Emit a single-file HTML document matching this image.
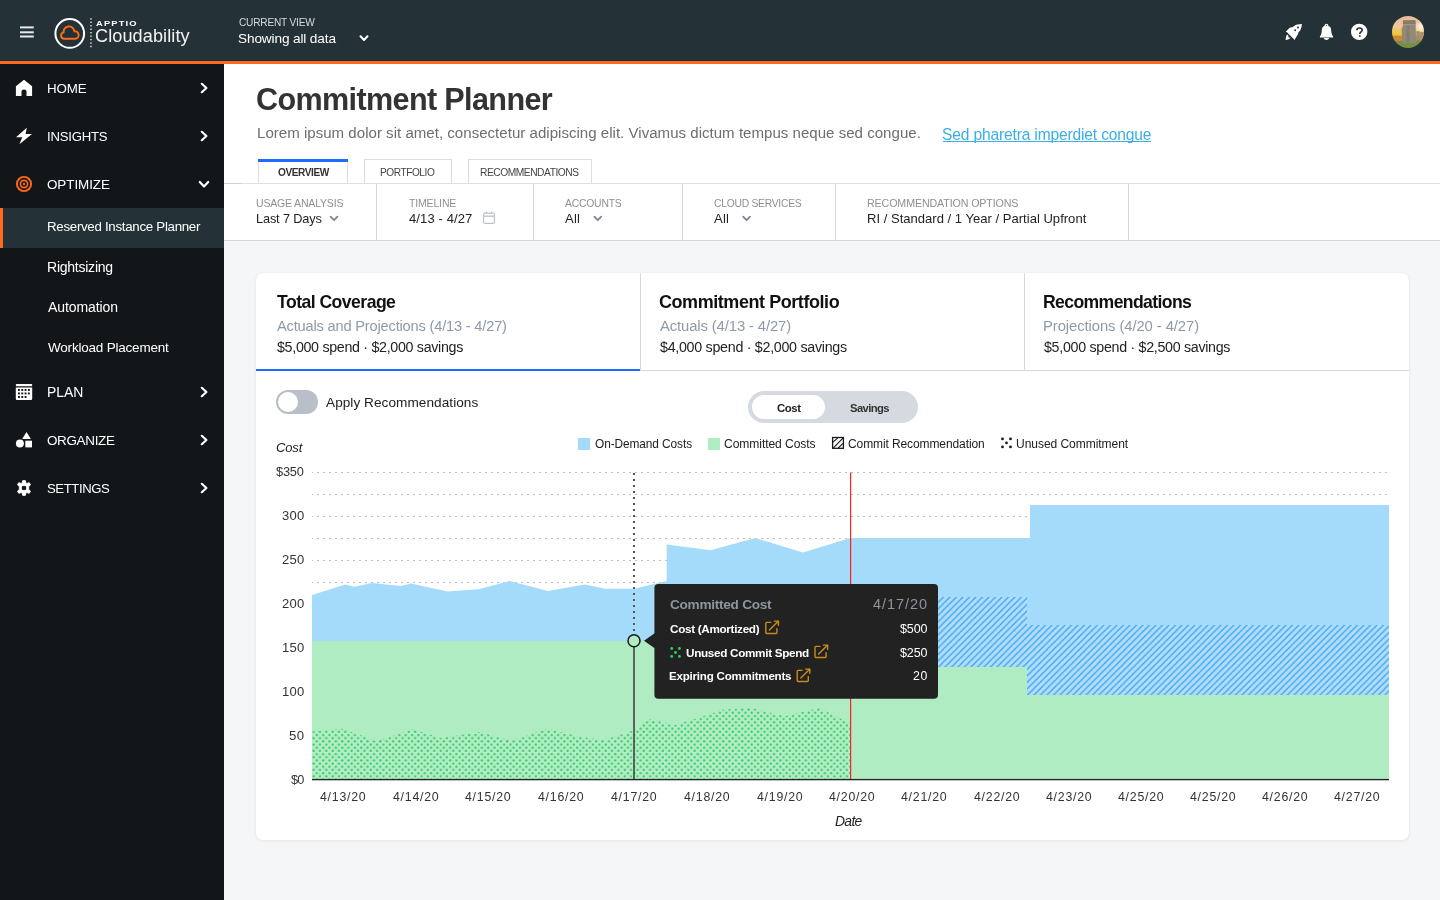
<!DOCTYPE html>
<html><head><meta charset="utf-8"><title>Commitment Planner</title>
<style>
*{box-sizing:border-box;margin:0;padding:0}
html,body{width:1440px;height:900px;overflow:hidden;background:#f5f6f8;font-family:'Liberation Sans', sans-serif}
.abs{position:absolute}
.t{position:absolute;white-space:nowrap;font-family:'Liberation Sans', sans-serif;will-change:transform}
</style></head><body>
<div class="abs" style="left:0;top:0;width:1440px;height:61px;background:#243238"></div>
<div class="abs" style="left:0;top:60px;width:1440px;height:1px;background:#1b2b36"></div>
<div class="abs" style="left:0;top:61px;width:1440px;height:3px;background:#ff6a1e"></div>
<div class="abs" style="left:0;top:64px;width:224px;height:836px;background:#121619"></div>
<div class="abs" style="left:0;top:208px;width:224px;height:40px;background:#243238"></div>
<div class="abs" style="left:0;top:208px;width:3px;height:40px;background:#ff6a1e"></div>
<div class="abs" style="left:224px;top:64px;width:1216px;height:177px;background:#ffffff"></div>
<div class="abs" style="left:224px;top:183px;width:1216px;height:1px;background:#e0e0e0"></div><div class="abs" style="left:224px;top:183px;width:18px;height:1px;background:#d2d2d2"></div>
<div class="abs" style="left:224px;top:240px;width:1216px;height:1px;background:#d6d6d6"></div>
<div class="abs" style="left:376px;top:184px;width:1px;height:56px;background:#d8d8d8"></div>
<div class="abs" style="left:533px;top:184px;width:1px;height:56px;background:#d8d8d8"></div>
<div class="abs" style="left:682px;top:184px;width:1px;height:56px;background:#d8d8d8"></div>
<div class="abs" style="left:835px;top:184px;width:1px;height:56px;background:#d8d8d8"></div>
<div class="abs" style="left:1128px;top:184px;width:1px;height:56px;background:#d8d8d8"></div>
<div class="abs" style="left:258px;top:159px;width:90px;height:24px;border:1px solid #dddddd;border-bottom:none;background:#fff"></div>
<div class="abs" style="left:258px;top:159px;width:90px;height:3px;background:#1f6bff"></div>
<div class="abs" style="left:364px;top:159px;width:88px;height:24px;border:1px solid #dddddd;border-bottom:none;background:#fff"></div>
<div class="abs" style="left:468px;top:159px;width:124px;height:24px;border:1px solid #dddddd;border-bottom:none;background:#fff"></div>
<div class="abs" style="left:943px;top:141px;width:208px;height:1px;background:#3aaee6"></div>
<div class="abs" style="left:256px;top:273px;width:1153px;height:567px;background:#fff;border-radius:7px;box-shadow:0 0 1px rgba(0,0,0,0.12),0 1px 4px rgba(0,0,0,0.06)"></div>
<div class="abs" style="left:256px;top:370px;width:1153px;height:1px;background:#d6dadf"></div>
<div class="abs" style="left:256px;top:369px;width:384px;height:2px;background:#1f6bff"></div>
<div class="abs" style="left:640px;top:273px;width:1px;height:97px;background:#d6dadf"></div>
<div class="abs" style="left:1024px;top:273px;width:1px;height:97px;background:#d6dadf"></div>
<div class="abs" style="left:276px;top:390px;width:42px;height:24px;border-radius:12px;background:#b8bfc9"></div>
<div class="abs" style="left:278px;top:392px;width:20px;height:20px;border-radius:10px;background:#fff"></div>
<div class="abs" style="left:748px;top:391px;width:170px;height:32px;border-radius:16px;background:#d5dae1"></div>
<div class="abs" style="left:752px;top:395px;width:73px;height:24px;border-radius:12px;background:#fff"></div>
<div class="abs" style="left:578px;top:438px;width:12px;height:12px;background:#a5dbfa"></div>
<div class="abs" style="left:708px;top:438px;width:12px;height:12px;background:#b0ecc2"></div>
<svg class="abs" width="1440" height="900" viewBox="0 0 1440 900" style="left:0;top:0">
<defs>
<pattern id="hatch" patternUnits="userSpaceOnUse" width="6.5" height="6.5">
<rect width="6.5" height="6.5" fill="#b3dcf8"/>
<path d="M-1.6,1.6 L1.6,-1.6 M0,6.5 L6.5,0 M4.9,8.1 L8.1,4.9" stroke="#33a5f5" stroke-width="1.3"/>
</pattern>
<pattern id="dots" patternUnits="userSpaceOnUse" width="6.35" height="6.35" x="312" y="0">
<rect width="6.35" height="6.35" fill="#b3ecc6"/>
<circle cx="1.6" cy="1.6" r="1.15" fill="#30cf60"/>
<circle cx="4.775" cy="4.775" r="1.15" fill="#30cf60"/>
</pattern>
</defs>
<g stroke="#bac0c9" stroke-width="1" stroke-dasharray="2 4" stroke-dashoffset="1"><line x1="312" y1="472.5" x2="1389" y2="472.5"/><line x1="312" y1="494.5" x2="1389" y2="494.5"/><line x1="312" y1="516.5" x2="1389" y2="516.5"/><line x1="312" y1="538.5" x2="1389" y2="538.5"/><line x1="312" y1="560.5" x2="1389" y2="560.5"/><line x1="312" y1="582.5" x2="1389" y2="582.5"/><line x1="312" y1="604.5" x2="1389" y2="604.5"/><line x1="312" y1="626.5" x2="1389" y2="626.5"/><line x1="312" y1="648.5" x2="1389" y2="648.5"/><line x1="312" y1="670.5" x2="1389" y2="670.5"/><line x1="312" y1="692.5" x2="1389" y2="692.5"/><line x1="312" y1="714.5" x2="1389" y2="714.5"/><line x1="312" y1="736.5" x2="1389" y2="736.5"/><line x1="312" y1="758.5" x2="1389" y2="758.5"/></g>
<polygon points="312.0,595.1 345.3,584.6 354.6,586.7 371.7,582.9 400.8,586.1 411.2,583.6 447.4,591.5 478.6,589.2 509.7,581.1 547.9,591.1 584.7,584.6 605.6,588.8 634.0,588.8 666.7,581.1 666.7,544.6 710.7,550.3 755.1,538.0 803.0,552.4 850.3,538.0 1030.0,538.0 1030.0,505.0 1389.0,505.0 1389.0,780.0 312.0,780.0" fill="#a5dbfa"/>
<rect x="312" y="641" width="538.5" height="139" fill="#b0ecc2"/>
<rect x="850.5" y="667" width="176.5" height="113" fill="#b0ecc2"/>
<rect x="1027" y="695" width="362" height="85" fill="#b0ecc2"/>
<rect x="850.5" y="597" width="176.5" height="70" fill="url(#hatch)"/>
<rect x="1027" y="625" width="362" height="70" fill="url(#hatch)"/>
<polygon points="312.0,731.5 342.0,728.8 357.5,734.0 376.0,741.2 413.0,729.2 441.2,738.0 480.0,732.0 511.2,740.9 547.2,728.8 580.0,736.7 603.3,740.2 632.5,730.8 650.0,719.2 675.3,725.0 696.7,718.2 724.0,709.5 751.2,707.9 784.3,716.3 819.3,707.9 849.5,723.0 850.5,723.0 850.5,779.0 312.0,779.0" fill="url(#dots)"/>
<rect x="312" y="778.9" width="1077" height="1.4" fill="#262626"/>
<rect x="850" y="472.5" width="1.2" height="306.5" fill="#ff2222"/>
<line x1="634" y1="473" x2="634" y2="634" stroke="#555" stroke-width="2" stroke-dasharray="2 4"/>
<rect x="633.2" y="647" width="1.6" height="132" fill="#444"/>
<circle cx="634" cy="640.7" r="6" fill="#b0ecc2" stroke="#1a1a1a" stroke-width="1.5"/>
<path d="M644,640.7 L655,633 L655,648.5 Z" fill="#222"/>
<rect x="654.4" y="584" width="283.6" height="114.8" rx="4" fill="#222222"/>
</svg>
<svg class="abs" width="1440" height="900" viewBox="0 0 1440 900" style="left:0;top:0;pointer-events:none">
<!-- hamburger -->
<g fill="#e6e8e9"><rect x="20" y="26.4" width="13.8" height="2"/><rect x="20" y="31.3" width="13.8" height="2"/><rect x="20" y="35.5" width="13.8" height="2"/></g>
<!-- logo -->
<circle cx="69.75" cy="33.45" r="14.35" fill="none" stroke="#ffffff" stroke-width="2"/>
<path d="M63.8,38.7 A3.2,3.2 0 0 1 63.6,32.4 A5.4,5.4 0 0 1 74.4,31.3 A3.75,3.75 0 0 1 75.6,38.7 Z" fill="none" stroke="#ff6a13" stroke-width="1.9" stroke-linejoin="round"/>
<g fill="#e8e8e8"><rect x="90.3" y="18.2" width="1.4" height="1.4"/><rect x="90.3" y="21.6" width="1.4" height="1.4"/><rect x="90.3" y="25.1" width="1.4" height="1.4"/><rect x="90.3" y="28.6" width="1.4" height="1.4"/><rect x="90.3" y="32.0" width="1.4" height="1.4"/><rect x="90.3" y="35.5" width="1.4" height="1.4"/><rect x="90.3" y="38.9" width="1.4" height="1.4"/><rect x="90.3" y="42.4" width="1.4" height="1.4"/><rect x="90.3" y="45.8" width="1.4" height="1.4"/></g>
<!-- header chevron -->
<path d="M360.5,36.3 L364,40 L367.5,36.3" fill="none" stroke="#ffffff" stroke-width="2" stroke-linecap="round" stroke-linejoin="round"/>
<!-- rocket -->
<path d="M1301.9,24 L1297.2,24.4 C1295.2,25.1 1293.7,26.1 1292.4,27.3 L1290,27.6 L1285.9,31.6 L1294.4,40 L1298.1,34 L1298.5,32.3 C1300.7,30.4 1301.7,27.4 1301.9,24 Z" fill="#ffffff"/>
<circle cx="1298" cy="27.6" r="1" fill="#243238"/>
<circle cx="1295.2" cy="30.2" r="0.95" fill="#243238"/>
<path d="M1285.6,40 C1285.7,37.6 1286.3,35.3 1287.7,34.1 C1289.2,32.8 1291.2,32.9 1292.2,34.2 C1292.6,36.6 1290.4,39.4 1285.6,40 Z" fill="#ffffff"/>
<circle cx="1289.4" cy="36.6" r="1.1" fill="#243238"/>
<line x1="1286.2" y1="32.6" x2="1293.6" y2="40" stroke="#243238" stroke-width="1.4"/>
<!-- bell -->
<path d="M1326.4,23.8 C1325.3,23.8 1324.6,24.6 1324.6,25.7 C1322.6,26.4 1321.9,28.2 1321.8,30.4 C1321.6,33 1321.2,34.9 1319.9,36.4 L1319.9,37.4 L1333.1,37.4 L1333.1,36.4 C1331.8,34.9 1331.4,33 1331.2,30.4 C1331.1,28.2 1330.4,26.4 1328.3,25.7 C1328.3,24.6 1327.5,23.8 1326.4,23.8 Z" fill="#ffffff"/>
<ellipse cx="1326.4" cy="25.4" rx="0.45" ry="0.7" fill="#243238"/>
<path d="M1323.7,38.1 L1329.1,38.1 C1328.7,39.4 1327.7,40 1326.4,40 C1325.1,40 1324.1,39.4 1323.7,38.1 Z" fill="#ffffff"/>
<!-- help -->
<circle cx="1359.2" cy="31.9" r="8.2" fill="#ffffff"/>
<path d="M1356.9,30.2 C1356.9,28.8 1357.9,28 1359.5,28 C1361.1,28 1362.2,28.8 1362.2,30.1 C1362.2,31.8 1359.8,31.9 1359.8,34" fill="none" stroke="#243238" stroke-width="1.6"/>
<rect x="1359" y="35.2" width="1.6" height="1.6" fill="#243238"/>
<!-- avatar -->
<defs>
<clipPath id="av"><circle cx="1408" cy="31.9" r="16"/></clipPath>
<linearGradient id="sky" x1="0" y1="0" x2="0" y2="1">
<stop offset="0" stop-color="#e6b49e"/><stop offset="0.55" stop-color="#f0c79a"/><stop offset="0.9" stop-color="#f2c440"/><stop offset="1" stop-color="#eeb828"/>
</linearGradient>
<radialGradient id="glow" cx="0.5" cy="0.5" r="0.5"><stop offset="0" stop-color="#fbf5ee"/><stop offset="1" stop-color="#fbf5ee" stop-opacity="0"/></radialGradient>
</defs>
<g clip-path="url(#av)">
<rect x="1390" y="14" width="36" height="22" fill="url(#sky)"/>
<circle cx="1421" cy="27" r="7" fill="url(#glow)"/>
<rect x="1390" y="35.8" width="36" height="5.5" fill="#c98a3c"/>
<path d="M1390,41.5 C1398,40.6 1412,41.2 1426,39.5 L1426,50 L1390,50 Z" fill="#77903f"/>
<path d="M1403,20.2 L1415.4,20 L1415.8,24.4 L1402.8,24.6 Z" fill="#857d6a"/>
<path d="M1401.6,29 L1403.4,24.4 L1415.6,24.4 L1416.2,43 L1402.4,43.2 Z" fill="#928a78"/>
<path d="M1406.8,26 L1409.6,25.6 L1409.4,42.8 L1406.4,42.8 Z" fill="#7e7664" opacity="0.6"/>
<rect x="1416.4" y="31.2" width="3.3" height="8.4" fill="#9f8c78"/>
<rect x="1420.2" y="32" width="3.6" height="7.6" fill="#a88f78"/>
</g>
<!-- sidebar icons -->
<path d="M24,79.8 L32.1,86.2 V95.4 Q32.1,96 31.5,96 H26.5 V91.6 C26.5,90.3 25.4,89.4 24,89.4 C22.6,89.4 21.5,90.3 21.5,91.6 V96 H16.5 Q15.9,96 15.9,95.4 V86.2 Z" fill="#ffffff"/>
<path d="M26.8,127.7 L16,137.3 L22.3,137.3 L19.4,144.3 L32,134 L25.6,134 Z" fill="#ffffff"/>
<circle cx="24" cy="184" r="7.1" fill="none" stroke="#ff6a1e" stroke-width="1.9"/>
<circle cx="24" cy="184" r="3.6" fill="none" stroke="#ff6a1e" stroke-width="1.7"/>
<circle cx="24" cy="184" r="1.2" fill="#ff6a1e"/>
<g fill="#ffffff">
<rect x="15.8" y="384" width="16.4" height="2.2" rx="0.8"/>
<path d="M15.8,387.4 H32.2 V398.8 Q32.2,400 31,400 H17 Q15.8,400 15.8,398.8 Z"/>
</g>
<g fill="#121619"><rect x="18.0" y="389.0" width="1.9" height="1.9"/><rect x="21.3" y="389.0" width="1.9" height="1.9"/><rect x="24.6" y="389.0" width="1.9" height="1.9"/><rect x="27.9" y="389.0" width="1.9" height="1.9"/><rect x="18.0" y="392.5" width="1.9" height="1.9"/><rect x="21.3" y="392.5" width="1.9" height="1.9"/><rect x="24.6" y="392.5" width="1.9" height="1.9"/><rect x="27.9" y="392.5" width="1.9" height="1.9"/><rect x="18.0" y="396.0" width="1.9" height="1.9"/><rect x="21.3" y="396.0" width="1.9" height="1.9"/><rect x="24.6" y="396.0" width="1.9" height="1.9"/></g>
<path d="M26.5,432 L30.9,439 L22.1,439 Z" fill="#ffffff"/>
<circle cx="19.9" cy="443.6" r="4" fill="#ffffff"/>
<rect x="25.3" y="440.7" width="6.7" height="6.7" fill="#ffffff"/>
<g transform="translate(24,488) scale(0.9)">
<path d="M-1.4,-8.2 H1.4 L2,-5.7 L3.3,-5 L5.8,-5.9 L7.2,-3.5 L5.2,-1.8 V1.8 L7.2,3.5 L5.8,5.9 L3.3,5 L2,5.7 L1.4,8.2 H-1.4 L-2,5.7 L-3.3,5 L-5.8,5.9 L-7.2,3.5 L-5.2,1.8 V-1.8 L-7.2,-3.5 L-5.8,-5.9 L-3.3,-5 L-2,-5.7 Z" fill="#ffffff" stroke="#ffffff" stroke-width="1" stroke-linejoin="round"/>
<circle r="2.6" fill="#121619"/>
</g>
<g fill="none" stroke="#ffffff" stroke-width="2.2" stroke-linecap="round" stroke-linejoin="round">
<path d="M201.8,83.8 L206.4,88 L201.8,92.2"/>
<path d="M201.8,131.8 L206.4,136 L201.8,140.2"/>
<path d="M199.8,182 L204,186.4 L208.2,182"/>
<path d="M201.8,387.8 L206.4,392 L201.8,396.2"/>
<path d="M201.8,435.8 L206.4,440 L201.8,444.2"/>
<path d="M201.8,483.8 L206.4,488 L201.8,492.2"/>
</g>
<!-- filter chevrons -->
<g fill="none" stroke="#7d889a" stroke-width="1.8" stroke-linecap="round" stroke-linejoin="round">
<path d="M330.6,216.6 L334,220.2 L337.4,216.6"/>
<path d="M594.4,216.6 L597.8,220.2 L601.2,216.6"/>
<path d="M743.2,216.6 L746.6,220.2 L750,216.6"/>
</g>
<!-- calendar -->
<g fill="none" stroke="#bcc3cb" stroke-width="1.3">
<rect x="483.6" y="213.2" width="10.8" height="10.2" rx="1.5"/>
<line x1="483.6" y1="216.2" x2="494.4" y2="216.2"/>
<line x1="486.5" y1="211.5" x2="486.5" y2="213.5"/>
<line x1="491.5" y1="211.5" x2="491.5" y2="213.5"/>
</g>
<!-- legend icons -->
<rect x="832.6" y="437.5" width="10.8" height="10.8" fill="none" stroke="#1a1a1a" stroke-width="1.3"/>
<g stroke="#1a1a1a" stroke-width="1.1">
<line x1="833" y1="442.2" x2="837.8" y2="437.8"/>
<line x1="833.4" y1="447.8" x2="843" y2="438.2"/>
<line x1="838.2" y1="448" x2="843" y2="443.4"/>
</g>
<g fill="#1a1a1a">
<circle cx="1002.5" cy="438.9" r="1.4"/><circle cx="1010.5" cy="438.9" r="1.4"/><circle cx="1006.5" cy="442.9" r="1.4"/><circle cx="1002.5" cy="446.9" r="1.4"/><circle cx="1010.5" cy="446.9" r="1.4"/>
</g>
<!-- tooltip icons -->
<g fill="#2ed15c">
<circle cx="671.7" cy="648.5" r="1.4"/><circle cx="679.4" cy="648.5" r="1.4"/><circle cx="675.5" cy="652.5" r="1.4"/><circle cx="671.7" cy="656.4" r="1.4"/><circle cx="679.4" cy="656.4" r="1.4"/>
</g>
<g transform="translate(765.2,620.4)" fill="none" stroke="#c98c1e" stroke-width="1.4" stroke-linecap="round" stroke-linejoin="round">
<path d="M5.5,2 H1.5 Q0.6,2 0.6,2.9 V12.2 Q0.6,13.1 1.5,13.1 H10.8 Q11.7,13.1 11.7,12.2 V8.2"/>
<path d="M4.2,9.6 L13,0.8"/><path d="M9,0.7 H13.2 V4.9"/>
</g><g transform="translate(814.4,644.4)" fill="none" stroke="#c98c1e" stroke-width="1.4" stroke-linecap="round" stroke-linejoin="round">
<path d="M5.5,2 H1.5 Q0.6,2 0.6,2.9 V12.2 Q0.6,13.1 1.5,13.1 H10.8 Q11.7,13.1 11.7,12.2 V8.2"/>
<path d="M4.2,9.6 L13,0.8"/><path d="M9,0.7 H13.2 V4.9"/>
</g><g transform="translate(796.6,668.4)" fill="none" stroke="#c98c1e" stroke-width="1.4" stroke-linecap="round" stroke-linejoin="round">
<path d="M5.5,2 H1.5 Q0.6,2 0.6,2.9 V12.2 Q0.6,13.1 1.5,13.1 H10.8 Q11.7,13.1 11.7,12.2 V8.2"/>
<path d="M4.2,9.6 L13,0.8"/><path d="M9,0.7 H13.2 V4.9"/>
</g>
</svg>
<div class="t" style="left:239.40px;top:18.00px;font-size:10.11px;line-height:10.11px;letter-spacing:-0.182px;color:#d5dadd">CURRENT VIEW</div>
<div class="t" style="left:238.40px;top:32.00px;font-size:13.64px;line-height:13.64px;letter-spacing:-0.133px;color:#ffffff">Showing all data</div>
<div class="t" style="left:95.80px;top:20.00px;font-size:7.30px;line-height:7.30px;letter-spacing:0.900px;color:#ffffff;font-weight:700;transform:scaleX(1.28);transform-origin:0 0">APPTIO</div>
<div class="t" style="left:94.80px;top:27.00px;font-size:18.12px;line-height:18.12px;letter-spacing:0.091px;color:#f2f2f2">Cloudability</div>
<div class="t" style="left:47.00px;top:82.00px;font-size:13.34px;line-height:13.34px;letter-spacing:-0.133px;color:#ffffff">HOME</div>
<div class="t" style="left:47.00px;top:130.00px;font-size:13.15px;line-height:13.15px;letter-spacing:-0.229px;color:#ffffff">INSIGHTS</div>
<div class="t" style="left:47.00px;top:178.00px;font-size:13.43px;line-height:13.43px;letter-spacing:-0.071px;color:#ffffff">OPTIMIZE</div>
<div class="t" style="left:47.00px;top:220.00px;font-size:13.32px;line-height:13.32px;letter-spacing:-0.300px;color:#ffffff">Reserved Instance Planner</div>
<div class="t" style="left:47.00px;top:260.00px;font-size:14.06px;line-height:14.06px;letter-spacing:-0.260px;color:#ffffff">Rightsizing</div>
<div class="t" style="left:48.00px;top:300.00px;font-size:14.00px;line-height:14.00px;letter-spacing:-0.078px;color:#ffffff">Automation</div>
<div class="t" style="left:48.00px;top:341.00px;font-size:13.51px;line-height:13.51px;letter-spacing:-0.206px;color:#ffffff">Workload Placement</div>
<div class="t" style="left:47.00px;top:386.00px;font-size:13.93px;line-height:13.93px;letter-spacing:-0.033px;color:#ffffff">PLAN</div>
<div class="t" style="left:47.00px;top:434.00px;font-size:13.45px;line-height:13.45px;letter-spacing:-0.329px;color:#ffffff">ORGANIZE</div>
<div class="t" style="left:47.00px;top:482.00px;font-size:13.12px;line-height:13.12px;letter-spacing:-0.386px;color:#ffffff">SETTINGS</div>
<div class="t" style="left:255.70px;top:84.00px;font-size:30.57px;line-height:30.57px;letter-spacing:-0.629px;color:#333333;font-weight:700">Commitment Planner</div>
<div class="t" style="left:256.80px;top:125.00px;font-size:15.07px;line-height:15.07px;letter-spacing:0.011px;color:#6e6e6e">Lorem ipsum dolor sit amet, consectetur adipiscing elit. Vivamus dictum tempus neque sed congue.</div>
<div class="t" style="left:942.00px;top:127.00px;font-size:15.58px;line-height:15.58px;letter-spacing:-0.157px;color:#3aaee6">Sed pharetra imperdiet congue</div>
<div class="t" style="left:277.50px;top:168.00px;font-size:10.12px;line-height:10.12px;letter-spacing:-0.429px;color:#333333;font-weight:700">OVERVIEW</div>
<div class="t" style="left:379.70px;top:168.00px;font-size:10.15px;line-height:10.15px;letter-spacing:-0.438px;color:#444444">PORTFOLIO</div>
<div class="t" style="left:479.70px;top:168.00px;font-size:10.24px;line-height:10.24px;letter-spacing:-0.464px;color:#444444">RECOMMENDATIONS</div>
<div class="t" style="left:255.50px;top:198.00px;font-size:10.54px;line-height:10.54px;letter-spacing:-0.192px;color:#8c9094">USAGE ANALYSIS</div>
<div class="t" style="left:409.00px;top:199.00px;font-size:10.47px;line-height:10.47px;letter-spacing:-0.143px;color:#8c9094">TIMELINE</div>
<div class="t" style="left:565.00px;top:199.00px;font-size:10.38px;line-height:10.38px;letter-spacing:-0.214px;color:#8c9094">ACCOUNTS</div>
<div class="t" style="left:714.00px;top:199.00px;font-size:10.35px;line-height:10.35px;letter-spacing:-0.269px;color:#8c9094">CLOUD SERVICES</div>
<div class="t" style="left:866.50px;top:198.00px;font-size:10.68px;line-height:10.68px;letter-spacing:-0.119px;color:#8c9094">RECOMMENDATION OPTIONS</div>
<div class="t" style="left:255.50px;top:213.00px;font-size:12.75px;line-height:12.75px;letter-spacing:-0.150px;color:#222222">Last 7 Days</div>
<div class="t" style="left:409.00px;top:212.00px;font-size:13.04px;line-height:13.04px;letter-spacing:0.100px;color:#222222">4/13 - 4/27</div>
<div class="t" style="left:565.00px;top:212.00px;font-size:13.04px;line-height:13.04px;letter-spacing:0.250px;color:#222222">All</div>
<div class="t" style="left:714.00px;top:212.00px;font-size:13.04px;line-height:13.04px;letter-spacing:0.250px;color:#222222">All</div>
<div class="t" style="left:866.50px;top:212.00px;font-size:13.04px;line-height:13.04px;letter-spacing:0.013px;color:#222222">RI / Standard / 1 Year / Partial Upfront</div>
<div class="t" style="left:277.30px;top:294.00px;font-size:17.62px;line-height:17.62px;letter-spacing:-0.538px;color:#111111;font-weight:700">Total Coverage</div>
<div class="t" style="left:277.30px;top:319.00px;font-size:14.63px;line-height:14.63px;letter-spacing:-0.183px;color:#8f9aa6">Actuals and Projections (4/13 - 4/27)</div>
<div class="t" style="left:277.30px;top:340.00px;font-size:14.25px;line-height:14.25px;letter-spacing:-0.307px;color:#222222">$5,000 spend · $2,000 savings</div>
<div class="t" style="left:659.30px;top:293.00px;font-size:17.98px;line-height:17.98px;letter-spacing:-0.421px;color:#111111;font-weight:700">Commitment Portfolio</div>
<div class="t" style="left:660.30px;top:319.00px;font-size:14.85px;line-height:14.85px;letter-spacing:-0.125px;color:#8f9aa6">Actuals (4/13 - 4/27)</div>
<div class="t" style="left:660.30px;top:340.00px;font-size:14.28px;line-height:14.28px;letter-spacing:-0.286px;color:#222222">$4,000 spend · $2,000 savings</div>
<div class="t" style="left:1043.30px;top:294.00px;font-size:17.62px;line-height:17.62px;letter-spacing:-0.621px;color:#111111;font-weight:700">Recommendations</div>
<div class="t" style="left:1043.30px;top:319.00px;font-size:14.82px;line-height:14.82px;letter-spacing:-0.083px;color:#8f9aa6">Projections (4/20 - 4/27)</div>
<div class="t" style="left:1044.30px;top:340.00px;font-size:14.23px;line-height:14.23px;letter-spacing:-0.286px;color:#222222">$5,000 spend · $2,500 savings</div>
<div class="t" style="left:326.40px;top:396.00px;font-size:13.62px;line-height:13.62px;letter-spacing:0.050px;color:#222222">Apply Recommendations</div>
<div class="t" style="left:776.70px;top:403.00px;font-size:11.39px;line-height:11.39px;letter-spacing:-0.433px;color:#222222;font-weight:700">Cost</div>
<div class="t" style="left:849.50px;top:403.00px;font-size:11.24px;line-height:11.24px;letter-spacing:-0.583px;color:#333333;font-weight:700">Savings</div>
<div class="t" style="left:275.50px;top:441.00px;font-size:13.02px;line-height:13.02px;letter-spacing:-0.167px;color:#222222;font-style:italic">Cost</div>
<div class="t" style="left:594.50px;top:439.00px;font-size:11.92px;line-height:11.92px;letter-spacing:-0.107px;color:#222222">On-Demand Costs</div>
<div class="t" style="left:724.00px;top:438.00px;font-size:12.08px;line-height:12.08px;letter-spacing:-0.071px;color:#222222">Committed Costs</div>
<div class="t" style="left:848.00px;top:438.00px;font-size:12.00px;line-height:12.00px;letter-spacing:-0.100px;color:#222222">Commit Recommendation</div>
<div class="t" style="left:1015.60px;top:438.00px;font-size:12.06px;line-height:12.06px;letter-spacing:-0.062px;color:#222222">Unused Commitment</div>
<div class="t" style="left:276.00px;top:466.00px;font-size:12.77px;line-height:12.77px;letter-spacing:-0.167px;color:#333333">$350</div>
<div class="t" style="left:282.00px;top:509.00px;font-size:13.04px;line-height:13.04px;letter-spacing:0.300px;color:#333333">300</div>
<div class="t" style="left:282.00px;top:553.00px;font-size:13.04px;line-height:13.04px;letter-spacing:0.300px;color:#333333">250</div>
<div class="t" style="left:282.00px;top:597.00px;font-size:13.04px;line-height:13.04px;letter-spacing:0.300px;color:#333333">200</div>
<div class="t" style="left:282.00px;top:641.00px;font-size:13.04px;line-height:13.04px;letter-spacing:0.300px;color:#333333">150</div>
<div class="t" style="left:282.00px;top:685.00px;font-size:13.04px;line-height:13.04px;letter-spacing:0.300px;color:#333333">100</div>
<div class="t" style="left:289.00px;top:729.00px;font-size:13.19px;line-height:13.19px;letter-spacing:0.300px;color:#333333">50</div>
<div class="t" style="left:291.00px;top:774.00px;font-size:12.73px;line-height:12.73px;letter-spacing:-0.800px;color:#333333">$0</div>
<div class="t" style="left:320.30px;top:791.00px;font-size:12.32px;line-height:12.32px;letter-spacing:0.767px;color:#333333">4/13/20</div>
<div class="t" style="left:392.60px;top:791.00px;font-size:12.32px;line-height:12.32px;letter-spacing:0.767px;color:#333333">4/14/20</div>
<div class="t" style="left:465.30px;top:791.00px;font-size:12.32px;line-height:12.32px;letter-spacing:0.767px;color:#333333">4/15/20</div>
<div class="t" style="left:538.40px;top:791.00px;font-size:12.32px;line-height:12.32px;letter-spacing:0.767px;color:#333333">4/16/20</div>
<div class="t" style="left:611.10px;top:791.00px;font-size:12.32px;line-height:12.32px;letter-spacing:0.767px;color:#333333">4/17/20</div>
<div class="t" style="left:684.20px;top:791.00px;font-size:12.32px;line-height:12.32px;letter-spacing:0.767px;color:#333333">4/18/20</div>
<div class="t" style="left:756.70px;top:791.00px;font-size:12.32px;line-height:12.32px;letter-spacing:0.767px;color:#333333">4/19/20</div>
<div class="t" style="left:829.20px;top:791.00px;font-size:12.32px;line-height:12.32px;letter-spacing:0.767px;color:#333333">4/20/20</div>
<div class="t" style="left:901.35px;top:791.00px;font-size:12.32px;line-height:12.32px;letter-spacing:0.767px;color:#333333">4/21/20</div>
<div class="t" style="left:973.60px;top:791.00px;font-size:12.32px;line-height:12.32px;letter-spacing:0.767px;color:#333333">4/22/20</div>
<div class="t" style="left:1045.85px;top:791.00px;font-size:12.32px;line-height:12.32px;letter-spacing:0.767px;color:#333333">4/23/20</div>
<div class="t" style="left:1117.55px;top:791.00px;font-size:12.32px;line-height:12.32px;letter-spacing:0.767px;color:#333333">4/25/20</div>
<div class="t" style="left:1189.75px;top:791.00px;font-size:12.32px;line-height:12.32px;letter-spacing:0.767px;color:#333333">4/25/20</div>
<div class="t" style="left:1261.65px;top:791.00px;font-size:12.32px;line-height:12.32px;letter-spacing:0.767px;color:#333333">4/26/20</div>
<div class="t" style="left:1333.65px;top:791.00px;font-size:12.32px;line-height:12.32px;letter-spacing:0.767px;color:#333333">4/27/20</div>
<div class="t" style="left:834.80px;top:815.00px;font-size:13.87px;line-height:13.87px;letter-spacing:-0.667px;color:#222222;font-style:italic">Date</div>
<div class="t" style="left:670.40px;top:598.00px;font-size:13.65px;line-height:13.65px;letter-spacing:-0.285px;color:#8d959e;font-weight:700">Committed Cost</div>
<div class="t" style="left:873.00px;top:597.00px;font-size:14.49px;line-height:14.49px;letter-spacing:0.950px;color:#8d959e">4/17/20</div>
<div class="t" style="left:670.00px;top:623.00px;font-size:11.71px;line-height:11.71px;letter-spacing:-0.313px;color:#ffffff;font-weight:700">Cost (Amortized)</div>
<div class="t" style="left:900.00px;top:623.00px;font-size:12.53px;line-height:12.53px;letter-spacing:-0.100px;color:#ffffff">$500</div>
<div class="t" style="left:685.70px;top:647.00px;font-size:11.72px;line-height:11.72px;letter-spacing:-0.317px;color:#ffffff;font-weight:700">Unused Commit Spend</div>
<div class="t" style="left:900.00px;top:647.00px;font-size:12.53px;line-height:12.53px;letter-spacing:-0.100px;color:#ffffff">$250</div>
<div class="t" style="left:668.50px;top:671.00px;font-size:11.58px;line-height:11.58px;letter-spacing:-0.221px;color:#ffffff;font-weight:700">Expiring Commitments</div>
<div class="t" style="left:913.00px;top:670.00px;font-size:12.32px;line-height:12.32px;letter-spacing:0.700px;color:#ffffff">20</div>
</body></html>
